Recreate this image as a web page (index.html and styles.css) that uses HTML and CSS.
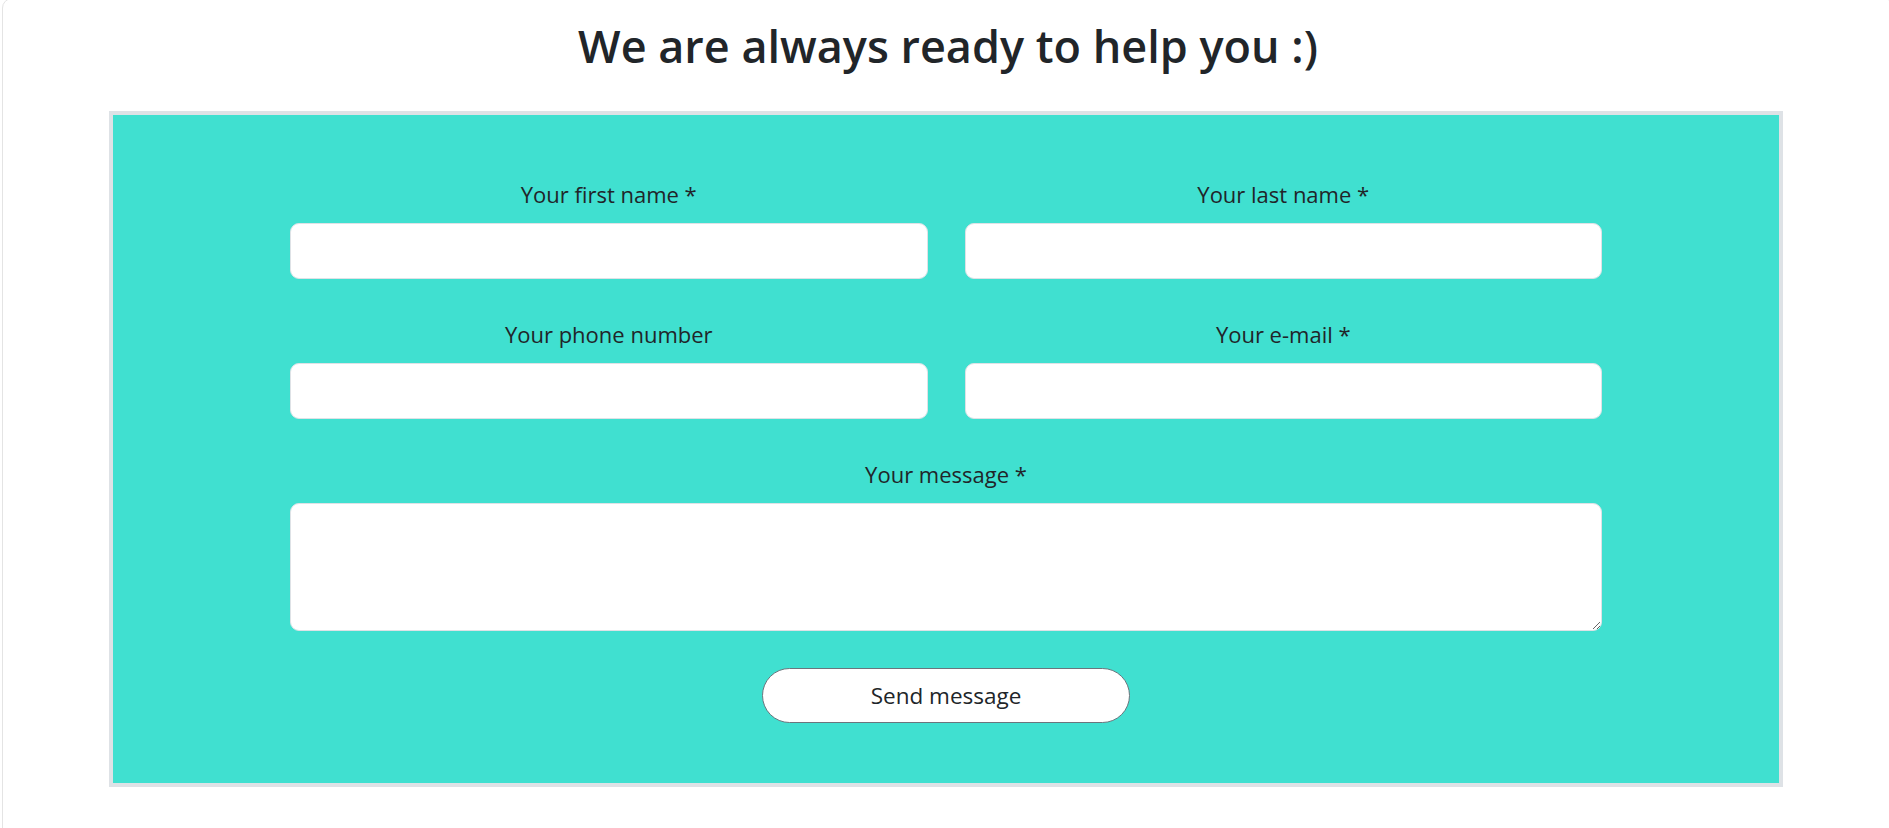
FILE: index.html
```html
<!DOCTYPE html>
<html lang="en">
<head>
<meta charset="utf-8">
<title>Contact</title>
<link rel="stylesheet" href="styles.css">
</head>
<body>
<div class="card">
  <h1 class="title">We are always ready to help you :)</h1>
  <div class="contact">
    <form class="form">
      <div class="grid">
        <div class="field">
          <label class="label" for="fn">Your first name *</label>
          <input class="input" id="fn" type="text">
        </div>
        <div class="field">
          <label class="label" for="ln">Your last name *</label>
          <input class="input" id="ln" type="text">
        </div>
        <div class="field">
          <label class="label" for="ph">Your phone number</label>
          <input class="input" id="ph" type="tel">
        </div>
        <div class="field">
          <label class="label" for="em">Your e-mail *</label>
          <input class="input" id="em" type="email">
        </div>
        <div class="field full">
          <label class="label" for="msg">Your message *</label>
          <textarea class="input textarea" id="msg"></textarea>
        </div>
      </div>
      <div class="actions">
        <button class="send" type="button">Send message</button>
      </div>
    </form>
  </div>
</div>
</body>
</html>
```
FILE: styles.css
```css
html, body {
  margin: 0;
  padding: 0;
  background: #ffffff;
  overflow: hidden;
}

body {
  font-family: "Open Sans", "Noto Sans", "Liberation Sans", sans-serif;
  color: #212529;
}

.card {
  box-sizing: border-box;
  margin-left: 2px;
  margin-top: -2px;
  width: 1892px;
  height: 840px;
  border: 1px solid #e4e4e4;
  border-radius: 10px;
  background: #fff;
  padding-top: 19px;
}

.title {
  margin: 0 0 37px;
  text-align: center;
  font-size: 45px;
  line-height: 56px;
  font-weight: 600;
  color: #212529;
}

.contact {
  box-sizing: border-box;
  width: 1674px;
  margin-left: 106px;
  background: #40e0d0;
  border: 4px solid #dee2e6;
  padding: 62px 0 60px;
}

.form {
  width: 1312px;
  margin: 0 auto;
}

.grid {
  display: grid;
  grid-template-columns: 1fr 1fr;
  column-gap: 37px;
  row-gap: 38px;
}

.field {
  display: flex;
  flex-direction: column;
}

.full {
  grid-column: 1 / -1;
}

.label {
  display: block;
  text-align: center;
  font-size: 22px;
  line-height: 34px;
  margin-bottom: 12px;
  color: #212529;
}

.input {
  box-sizing: border-box;
  height: 56px;
  border: 1px solid #dee2e6;
  border-radius: 9px;
  background: #fff;
  font-family: inherit;
  font-size: 21px;
  padding: 0 16px;
  outline: none;
}

.textarea {
  height: 128px;
  resize: vertical;
  padding: 10px 16px;
}

.actions {
  display: flex;
  justify-content: center;
  margin-top: 37px;
}

.send {
  box-sizing: border-box;
  width: 368px;
  height: 55px;
  border: 1px solid #6c757d;
  border-radius: 28px;
  background: #fff;
  color: #212529;
  font-family: inherit;
  font-size: 22.5px;
  cursor: pointer;
}
```
